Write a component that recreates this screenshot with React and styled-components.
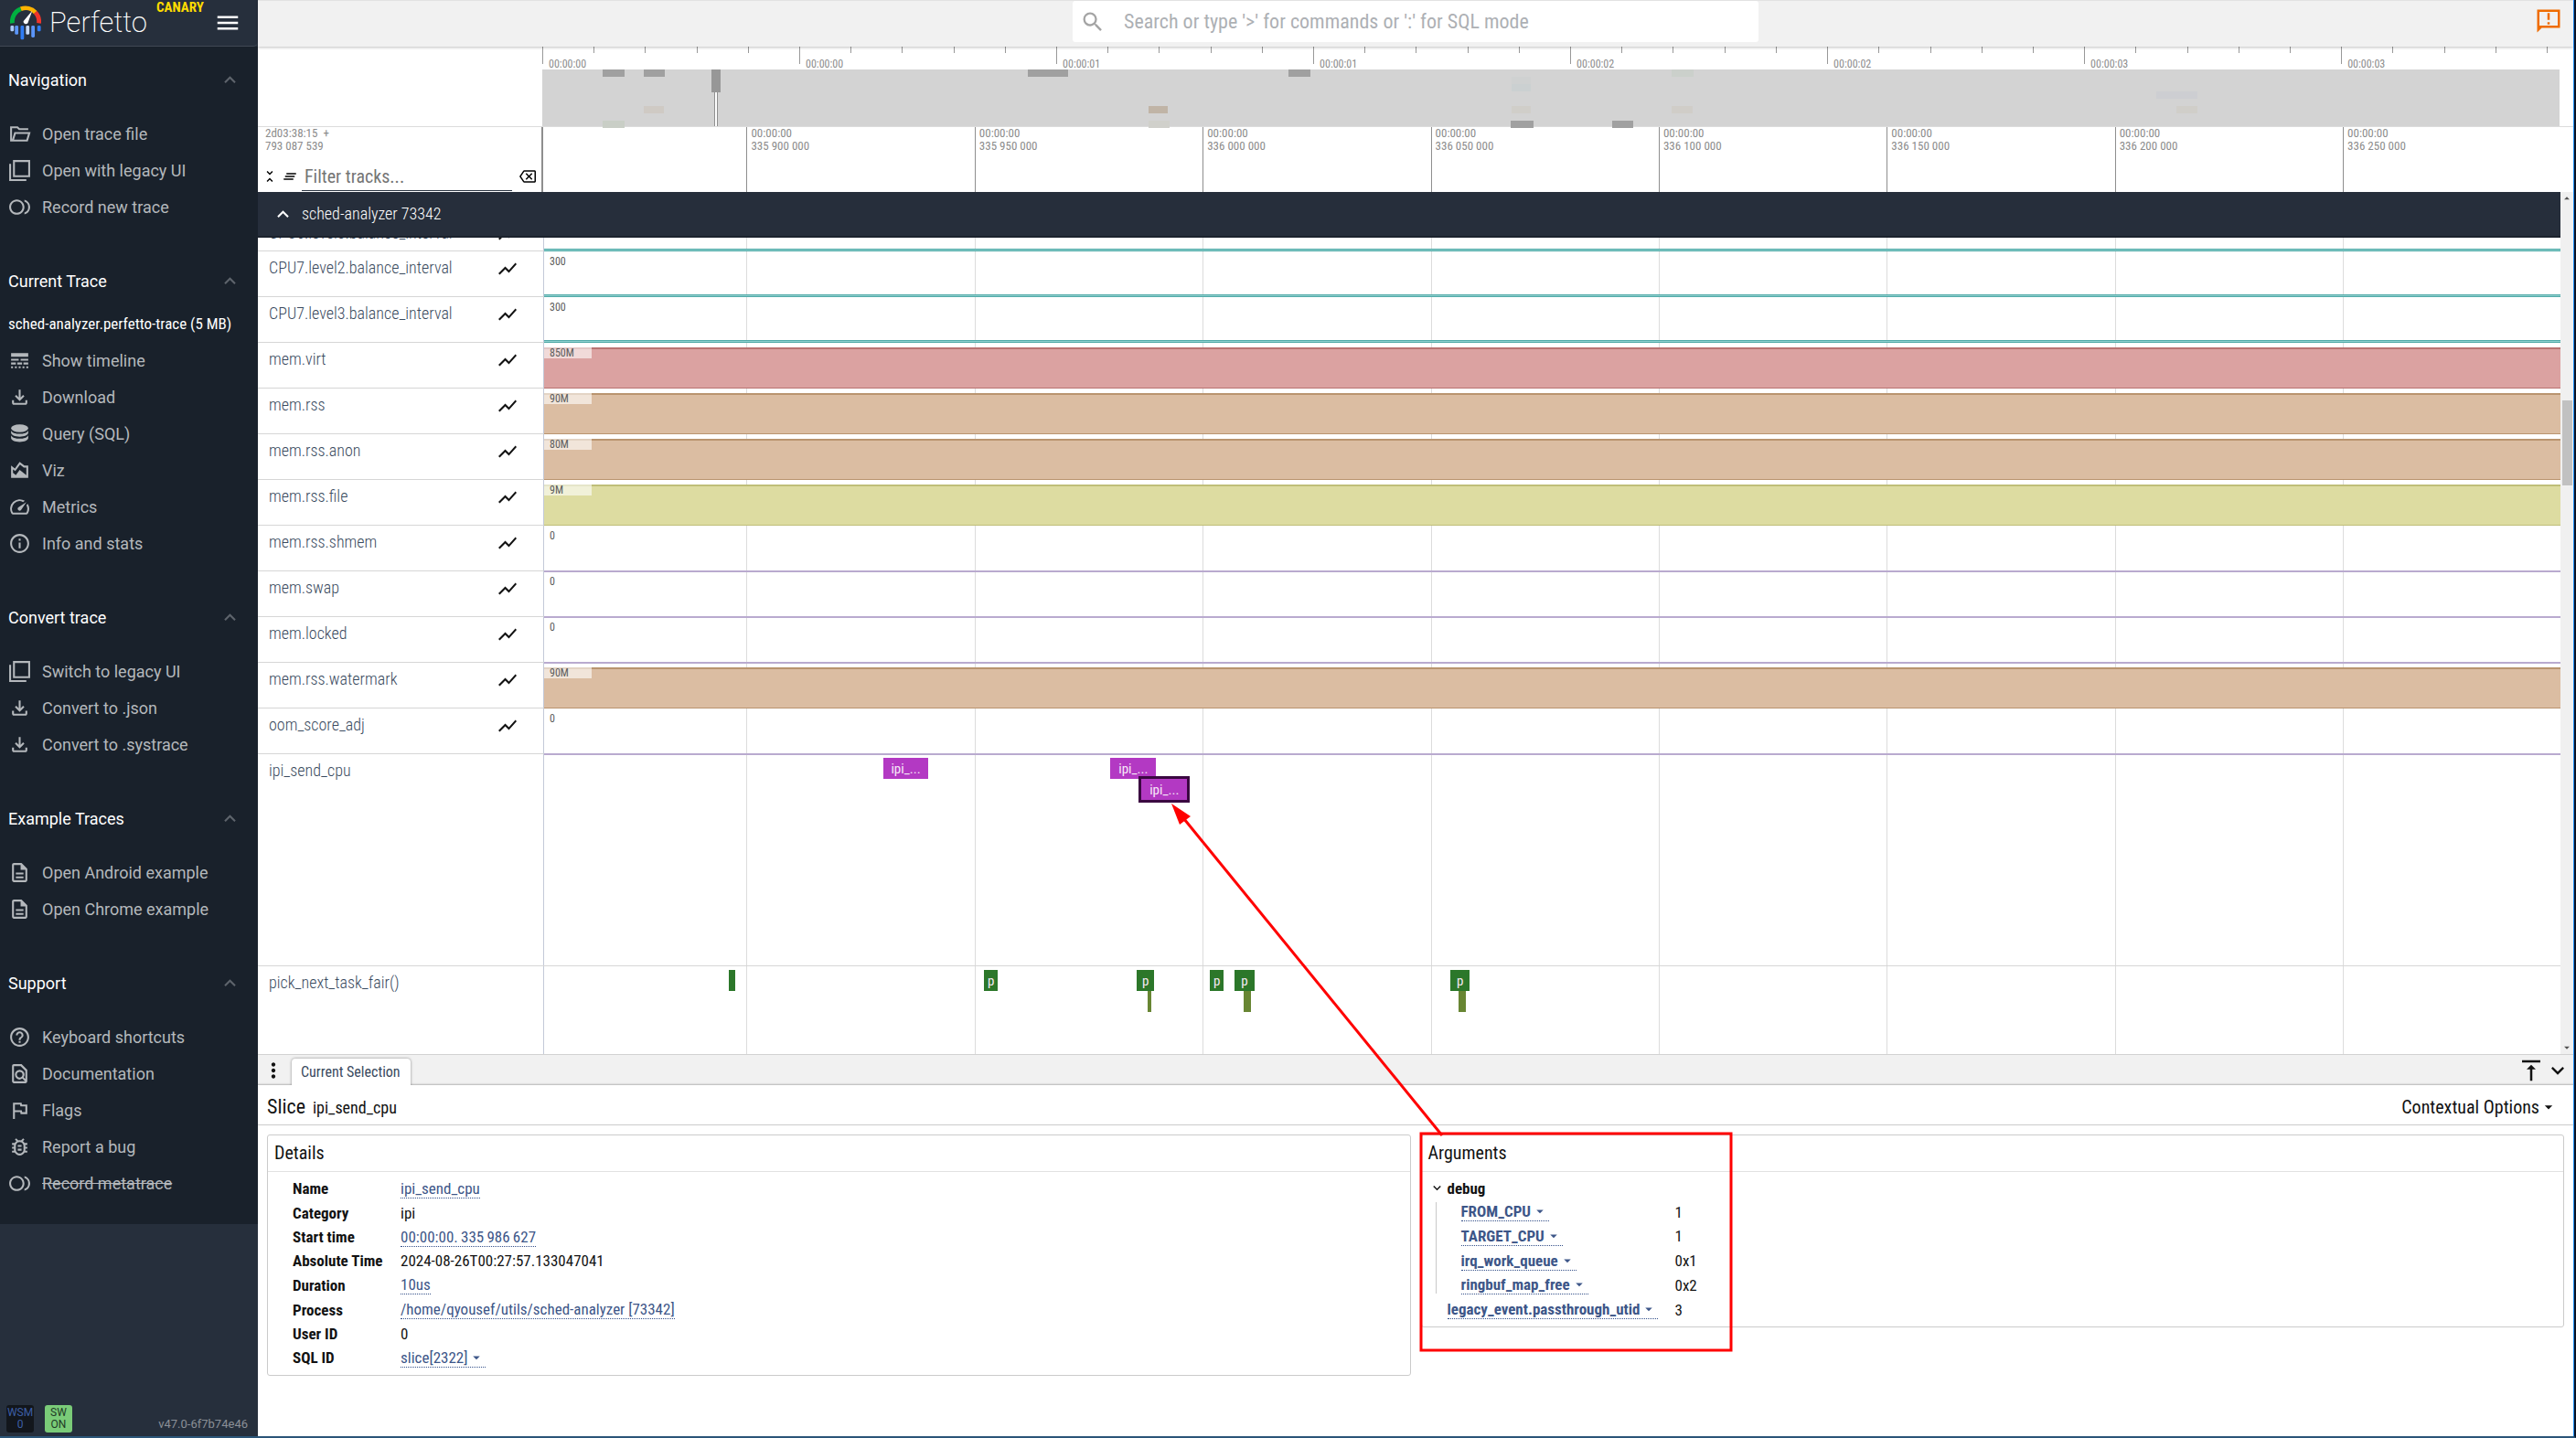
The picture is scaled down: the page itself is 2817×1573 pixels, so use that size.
import React from "react";
import styled, { createGlobalStyle, css } from "styled-components";
import {
  MdOutlineFiberSmartRecord,
  MdLineStyle,
  MdOutlineFileDownload,
  MdOutlineAreaChart,
  MdSpeed,
  MdInfoOutline,
  MdOutlineDescription,
  MdHelpOutline,
  MdOutlineFindInPage,
  MdOutlineFlag,
  MdOutlineBugReport,
  MdShowChart,
  MdClearAll,
  MdUnfoldLess,
  MdOutlineBackspace,
  MdVerticalAlignTop,
  MdExpandMore,
  MdExpandLess,
  MdMoreVert,
  MdMenu,
  MdSearch,
  MdArrowDropDown,
  MdArrowDropUp,
} from "react-icons/md";

const SANS = `Roboto, "Liberation Sans", sans-serif`;
const CONDENSED = `"Roboto Condensed", Roboto, "Liberation Sans", sans-serif`;

const GlobalStyle = createGlobalStyle`
  *, *::before, *::after { box-sizing: border-box; }
  body { margin: 0; background: #fff; font-family: ${SANS}; color: #121212; }
  button { font: inherit; color: inherit; background: none; border: 0; padding: 0; cursor: pointer; }
  ul { list-style: none; margin: 0; padding: 0; }
  h1, h2, h3 { margin: 0; font-weight: 400; }
  svg { display: block; flex: none; }
`;

/* ---------- shell ---------- */

const Page = styled.div`
  position: relative;
  display: flex;
  height: 100vh;
  overflow: hidden;
  border-right: 2px solid #0a1326;
  border-bottom: 2px solid #2b5578;
`;

const Main = styled.main`
  flex: 1;
  min-width: 0;
  display: flex;
  flex-direction: column;
  border-right: 1px solid #1e8fff;
`;

/* ---------- sidebar ---------- */

const Sidebar = styled.nav`
  flex: 0 0 282px;
  display: flex;
  flex-direction: column;
  background: #262f3c;
`;

const Brand = styled.header`
  display: flex;
  align-items: center;
  height: 51px;
  padding: 0 18px 0 11px;
  border-bottom: 1px solid #404854;
  border-bottom-right-radius: 5px;
`;

const BrandName = styled.h1`
  margin-left: 9px;
  font-size: 31px;
  line-height: 36px;
  font-weight: 200;
  color: #fff;
`;

const Channel = styled.span`
  align-self: flex-start;
  margin-left: 10px;
  font: 700 15px/16px ${CONDENSED};
  color: #ffdd00;
`;

const MenuButton = styled.button`
  margin-left: auto;
  font-size: 30px;
  color: #fff;
`;

const SidebarScroll = styled.div`
  display: flex;
  flex-direction: column;
  gap: 43px;
  padding: 18px 0 25px;
  background: #19212b;
`;

const SectionTitle = styled.h2`
  display: flex;
  align-items: center;
  justify-content: space-between;
  height: 36px;
  padding: 0 18px 0 9px;
  margin-bottom: ${(p) => (p.$tight ? 9 : 21)}px;
  font-size: 18px;
  font-weight: 400;
  color: #fff;

  svg {
    font-size: 25px;
    color: #5e646c;
  }
`;

const TraceName = styled.div`
  padding-left: 9px;
  font: 400 17px/40px ${CONDENSED};
  color: #fff;
  white-space: nowrap;
`;

const NavLink = styled.a`
  display: flex;
  align-items: center;
  gap: 12px;
  height: 40px;
  padding-left: 9px;
  font-size: 18px;
  color: #b4b8bc;
  text-decoration: ${(p) => (p.$struck ? "line-through" : "none")};

  svg {
    font-size: 25px;
  }
`;

const SidebarFooter = styled.footer`
  display: flex;
  align-items: flex-end;
  gap: 12px;
  margin-top: auto;
  padding: 0 11px 4px 7px;
`;

const Badge = styled.button`
  width: 30px;
  height: 30px;
  border-radius: 3px;
  background: ${(p) => (p.$on ? "#7acb78" : "#12161c")};
  color: ${(p) => (p.$on ? "#1f3a26" : "#3d5fa6")};
  font-size: 12px;
  line-height: 13px;
`;

const Version = styled.a`
  margin-left: auto;
  font-size: 13px;
  line-height: 18px;
  color: #8b9097;
  text-decoration: none;
`;

/* ---------- top bar ---------- */

const Topbar = styled.header`
  position: relative;
  z-index: 2;
  flex: none;
  display: grid;
  grid-template-columns: 1fr 750px 1fr;
  align-items: start;
  height: 51px;
  padding-top: 1px;
  background: #f1f1f1;
  box-shadow: 0 1px 3px rgba(0, 0, 0, 0.25), inset 0 1px 0 #e2e2e2;
`;

const Omnibox = styled.label`
  grid-column: 2;
  display: flex;
  align-items: center;
  gap: 20px;
  height: 45px;
  padding-left: 8px;
  border-radius: 3px;
  background: #fff;

  svg {
    font-size: 28px;
    color: #a4a4a4;
  }

  input {
    flex: 1;
    border: 0;
    outline: 0;
    padding: 0;
    background: none;
    font: 400 22px/30px ${CONDENSED};
  }

  input::placeholder {
    color: #adb0b4;
    opacity: 1;
  }
`;

const AlertButton = styled.button`
  justify-self: end;
  margin: 7px 12px 0 0;
  font-size: 30px;
  color: #ef6c00;
`;

/* ---------- overview ---------- */

const Overview = styled.section`
  flex: none;
  padding: 0 15px 0 311px;
  border-bottom: 1px solid #dcdcdc;
`;

const OverviewRuler = styled.div`
  position: relative;
  height: 25px;
  overflow: hidden;
`;

const Tick = styled.span`
  position: absolute;
  top: 0;
  height: ${(p) => (p.$major ? 19 : 7)}px;
  border-left: 1px solid #999;
`;

const TickLabel = styled.span`
  position: absolute;
  top: 11px;
  padding-left: 7px;
  font: 400 12px/16px ${CONDENSED};
  color: #8c8c8c;
`;

const OverviewBand = styled.div`
  position: relative;
  height: 62px;
  background: #d3d3d3;
`;

const Load = styled.span`
  position: absolute;
  top: ${(p) => p.$lane * 8}px;
  height: 8px;
  background: ${(p) => p.$tone};
`;

const Brush = styled.button`
  position: absolute;
  top: 0;
  width: 10px;
  height: 62px;
  background: linear-gradient(#979797 25px, transparent 25px);

  &::after {
    content: "";
    position: absolute;
    left: 3px;
    top: 25px;
    bottom: 0;
    width: 4px;
    background: #fff;
    border: solid #8f8f8f;
    border-width: 0 1px;
  }
`;

/* ---------- time axis ---------- */

const AxisRow = styled.section`
  flex: none;
  display: flex;
  height: 71px;
`;

const AxisShell = styled.div`
  flex: 0 0 312px;
  display: flex;
  flex-direction: column;
  justify-content: space-between;
  padding: 0 6px 1px 4px;
  border-right: 2px solid #8e8e8e;
`;

const Stamp = styled.div`
  padding-left: 4px;
  font: 400 13px/14px ${CONDENSED};
  color: #8c8c8c;
  white-space: pre;
`;

const FilterBar = styled.div`
  display: flex;
  align-items: center;
  height: 32px;

  button {
    font-size: 18px;
    color: #000;
  }

  button + button {
    margin-left: 4px;
  }

  input {
    width: 230px;
    height: 32px;
    margin: 0 8px 0 4px;
    padding: 0 0 0 3px;
    border: 0;
    border-bottom: 1px solid #2a3442;
    border-radius: 0;
    outline: 0;
    background: none;
    font: 400 20px/28px ${CONDENSED};
  }

  input::placeholder {
    color: #757575;
    opacity: 1;
  }
`;

const AxisCanvas = styled.div`
  position: relative;
  flex: 1;
  margin-right: 14px;
  overflow: hidden;
`;

const AxisMark = styled.div`
  position: absolute;
  top: 0;
  bottom: 0;
  border-left: 1px solid #8e8e8e;
`;

/* ---------- tracks ---------- */

const Viewport = styled.section`
  flex: 1;
  min-height: 0;
  display: flex;
`;

const TrackPane = styled.div`
  flex: 1;
  min-width: 0;
  display: flex;
  flex-direction: column;
`;

const GroupHeader = styled.button`
  position: relative;
  z-index: 1;
  flex: none;
  display: flex;
  align-items: center;
  gap: 8px;
  height: 50px;
  padding-left: 15px;
  background: #262e3b;
  border-bottom: 2px solid #1c232d;
  color: #fff;
  font: 300 18px/24px ${CONDENSED};

  svg {
    font-size: 25px;
  }
`;

const TrackClip = styled.div`
  position: relative;
  flex: 1;
  min-height: 0;
  overflow: hidden;
`;

const GridLayer = styled.div`
  position: absolute;
  inset: 0 0 0 312px;
`;

const GridLine = styled.span`
  position: absolute;
  top: 0;
  bottom: 0;
  border-left: 1px solid #dcdcdc;
`;

const TrackList = styled.div`
  position: relative;
  margin-top: -23px;
`;

const Track = styled.div`
  display: flex;
  height: ${(p) => p.$height}px;
`;

const TrackShell = styled.div`
  flex: 0 0 313px;
  display: flex;
  align-items: flex-start;
  justify-content: space-between;
  padding: 0 27px 0 12px;
  border-right: 1px solid #c3c9d8;
  border-bottom: 1px solid #d6d6d6;
  font: 300 18px/36px ${CONDENSED};
  color: #3a4a5e;

  button {
    padding-top: 7px;
    font-size: 24px;
    color: #121212;
  }
`;

const CounterCanvas = styled.div`
  flex: 1;
  position: relative;
  display: flex;
  flex-direction: column;
  justify-content: flex-end;
`;

const counterLook = {
  line: css`
    height: 3px;
    background: #8fd0ce;
    border: solid #4fa9a7;
    border-width: 1px 0;
  `,
  zero: css`
    height: 2px;
    margin-bottom: -1px;
    background: #b9aacf;
  `,
  area: css`
    height: 45px;
    background: ${(p) => p.$tone[0]};
    border: solid ${(p) => p.$tone[1]};
    border-width: 2px 0 1px;
  `,
};

const CounterFill = styled.div`
  ${(p) => counterLook[p.$kind]}
`;

const CounterLabel = styled.span`
  position: absolute;
  top: 5px;
  left: 0;
  width: ${(p) => (p.$chip ? "52px" : "auto")};
  padding-left: 6px;
  background: ${(p) => (p.$chip ? "rgba(255, 255, 255, 0.6)" : "none")};
  font: 400 12px/12px ${CONDENSED};
  color: #5c5c5c;
`;

const SliceCanvas = styled.div`
  flex: 1;
  position: relative;
  margin-left: -1px;
  border-bottom: 1px solid #d6d6d6;
`;

const sliceTone = { ipi: "#b339c3", pick: "#2c772a", nested: "#688633" };

const Slice = styled.button`
  position: absolute;
  top: ${(p) => 4 + p.$depth * 23}px;
  height: 23px;
  overflow: hidden;
  background: ${(p) => sliceTone[p.$tone]};
  color: #f7e9f8;
  font: 400 15px/22px ${CONDENSED};
  text-align: center;
  white-space: nowrap;
  ${(p) => p.$selected && "outline: 3px solid #3b0841;"}
`;

const Scrollbar = styled.div`
  flex: 0 0 14px;
  min-width: 0;
  display: flex;
  flex-direction: column;
  align-items: center;
  background: #f0f0f0;
  color: #505050;
  font-size: 14px;
`;

const Thumb = styled.div`
  width: 11px;
  height: 93px;
  margin-top: 214px;
  margin-bottom: auto;
  background: #c1c1c1;
`;

/* ---------- details panel ---------- */

const Drawer = styled.section`
  flex: 0 0 418px;
  display: flex;
  flex-direction: column;
  background: #fff;
`;

const TabStrip = styled.div`
  display: flex;
  align-items: flex-end;
  height: 34px;
  padding: 0 3px 0 4px;
  background: #f1f1f1;
  border-top: 1px solid #d2d2d2;
  box-shadow: inset 0 -2px 2px -1px rgba(0, 0, 0, 0.25);
`;

const IconButton = styled.button`
  align-self: center;
  font-size: ${(p) => p.$size}px;
  color: #121212;
`;

const Tab = styled.button`
  height: 29px;
  margin: 0 auto 0 7px;
  padding: 0 11px 0 10px;
  border-radius: 4px 4px 0 0;
  background: #fff;
  box-shadow: 0 0 3px rgba(0, 0, 0, 0.45);
  clip-path: inset(-4px -4px 0 -4px);
  font: 400 16px/29px ${CONDENSED};
  color: #3a4a5e;
`;

const DrawerHeader = styled.header`
  display: flex;
  align-items: baseline;
  gap: 8px;
  height: 44px;
  padding: 0 17px 0 10px;
  border-bottom: 1px solid #cbcbcb;
  font: 400 18px/48px ${CONDENSED};
`;

const DrawerTitle = styled.h2`
  font-size: 22px;
  line-height: 48px;
`;

const OptionsButton = styled.button`
  display: flex;
  align-items: center;
  margin-left: auto;
  font-size: 20px;
  line-height: 48px;
`;

const Cards = styled.div`
  display: grid;
  grid-template-columns: 1fr 1fr;
  align-items: start;
  gap: 11px;
  padding: 10px;
`;

const Card = styled.section`
  border: 1px solid #cbcbcb;
  border-radius: 3px;
`;

const CardTitle = styled.h3`
  padding-left: 7px;
  border-bottom: 1px solid #e2e2e2;
  font: 400 20px/39px ${CONDENSED};
`;

const FactTable = styled.table`
  height: ${(p) => p.$height}px;
  margin: 5px 0 5px ${(p) => p.$indent}px;
  border-collapse: collapse;
  font: 400 17px/20px ${CONDENSED};

  th,
  td {
    padding: 0;
    text-align: left;
    vertical-align: middle;
    white-space: nowrap;
  }

  th {
    width: ${(p) => p.$keyWidth}px;
    font-weight: 700;
  }
`;

const TreeKey = styled.div`
  display: flex;
  align-items: center;
  padding-left: ${(p) => (p.$leaf ? 20 : 24)}px;
`;

const Branch = styled.td`
  && {
    width: 11px;
  }

  background: linear-gradient(#c9c9c9, #c9c9c9) 7px 3px / 1px 100px no-repeat;
`;

const Toggle = styled.button`
  display: flex;
  align-items: center;
  gap: 3px;
  font-weight: 700;
`;

const linkLook = css`
  display: inline-flex;
  align-items: center;
  height: 21px;
  border-bottom: 1px dotted #34508a;
  color: #3d5688;
  text-decoration: none;

  svg {
    margin: 0 1px;
    font-size: 18px;
  }
`;

const ValueLink = styled.a`
  ${linkLook}
`;

const MenuLink = styled.button`
  ${linkLook}
  font-weight: inherit;
`;

const Annotation = styled.svg`
  position: absolute;
  inset: 0;
  z-index: 5;
  width: 100%;
  height: 100%;
  pointer-events: none;
`;

/* ---------- data ---------- */

const sections = [
  {
    title: "Navigation",
    items: [
      [FolderIcon, "Open trace file"],
      [StackIcon, "Open with legacy UI"],
      [MdOutlineFiberSmartRecord, "Record new trace"],
    ],
  },
  {
    title: "Current Trace",
    file: "sched-analyzer.perfetto-trace (5 MB)",
    items: [
      [MdLineStyle, "Show timeline"],
      [MdOutlineFileDownload, "Download"],
      [DatabaseIcon, "Query (SQL)"],
      [MdOutlineAreaChart, "Viz"],
      [MdSpeed, "Metrics"],
      [MdInfoOutline, "Info and stats"],
    ],
  },
  {
    title: "Convert trace",
    items: [
      [StackIcon, "Switch to legacy UI"],
      [MdOutlineFileDownload, "Convert to .json"],
      [MdOutlineFileDownload, "Convert to .systrace"],
    ],
  },
  {
    title: "Example Traces",
    items: [
      [MdOutlineDescription, "Open Android example"],
      [MdOutlineDescription, "Open Chrome example"],
    ],
  },
  {
    title: "Support",
    items: [
      [MdHelpOutline, "Keyboard shortcuts"],
      [MdOutlineFindInPage, "Documentation"],
      [MdOutlineFlag, "Flags"],
      [MdOutlineBugReport, "Report a bug"],
      [MdOutlineFiberSmartRecord, "Record metatrace", true],
    ],
  },
];

// Overview times are in milliseconds from the start of the trace.
const TRACE_MS = 3925;
const ofTrace = (ms) => `${(ms / TRACE_MS) * 100}%`;

const loads = [
  [117, 43, 0, "#a0a0a0"],
  [198, 41, 0, "#a0a0a0"],
  [944, 79, 0, "#a0a0a0"],
  [1452, 43, 0, "#a0a0a0"],
  [117, 43, 7, "#c9cec6"],
  [198, 38, 5, "#cfcac4"],
  [1180, 37, 5, "#c0b4a6"],
  [1180, 40, 7, "#d0d0cb"],
  [1886, 37, 1, "#cfd1d1"],
  [1886, 37, 2, "#cbd0d1"],
  [1886, 37, 5, "#d0cec9"],
  [1885, 43, 7, "#a0a0a0"],
  [2081, 42, 7, "#a0a0a0"],
  [2198, 42, 0, "#cbd0cb"],
  [2198, 41, 5, "#d0cdc8"],
  [3141, 79, 3, "#cdced2"],
  [3180, 40, 5, "#d0cec9"],
];

// Slice times are in microseconds; the window shows 442 of them.
const WINDOW_START = 335855.4;
const WINDOW_SPAN = 442.3;
const ofSpan = (us) => `${(us / WINDOW_SPAN) * 100}%`;
const atTime = (us) => ofSpan(us - WINDOW_START);

const marks = Array.from({ length: 8 }, (_, i) => 335900 + i * 50);

const tones = {
  red: ["#dba2a1", "#b97372"],
  tan: ["#dbbda2", "#b9946f"],
  olive: ["#dddca1", "#bfbe78"],
};

const counters = [
  ["CPU6.level3.balance_interval", null, "line"],
  ["CPU7.level2.balance_interval", "300", "line"],
  ["CPU7.level3.balance_interval", "300", "line"],
  ["mem.virt", "850M", "area", "red"],
  ["mem.rss", "90M", "area", "tan"],
  ["mem.rss.anon", "80M", "area", "tan"],
  ["mem.rss.file", "9M", "area", "olive"],
  ["mem.rss.shmem", "0", "zero"],
  ["mem.swap", "0", "zero"],
  ["mem.locked", "0", "zero"],
  ["mem.rss.watermark", "90M", "area", "tan"],
  ["oom_score_adj", "0", "zero"],
];

const sliceTracks = [
  {
    name: "ipi_send_cpu",
    height: 232,
    slices: [
      { ts: 335929.9, dur: 10, text: "ipi_...", tone: "ipi" },
      { ts: 335979.8, dur: 10, text: "ipi_...", tone: "ipi" },
      { ts: 335986.6, dur: 10, depth: 1, text: "ipi_...", tone: "ipi", selected: true },
    ],
  },
  {
    name: "pick_next_task_fair()",
    height: 120,
    slices: [
      { ts: 335896.1, dur: 1.5, tone: "pick" },
      { ts: 335952.1, dur: 3, text: "p", tone: "pick" },
      { ts: 335985.5, dur: 3.9, text: "p", tone: "pick" },
      { ts: 335987.9, dur: 0.8, depth: 1, tone: "nested" },
      { ts: 336001.6, dur: 3, text: "p", tone: "pick" },
      { ts: 336007, dur: 4.3, text: "p", tone: "pick" },
      { ts: 336008.9, dur: 1.7, depth: 1, tone: "nested" },
      { ts: 336054.3, dur: 4.3, text: "p", tone: "pick" },
      { ts: 336056, dur: 1.8, depth: 1, tone: "nested" },
    ],
  },
];

const facts = [
  ["Name", "ipi_send_cpu", "link"],
  ["Category", "ipi"],
  ["Start time", "00:00:00.\u2009335\u2009986\u2009627", "link"],
  ["Absolute Time", "2024-08-26T00:27:57.133047041"],
  ["Duration", "10us", "link"],
  ["Process", "/home/qyousef/utils/sched-analyzer [73342]", "link"],
  ["User ID", "0"],
  ["SQL ID", "slice[2322]", "menu"],
];

const debugArgs = [
  ["FROM_CPU", "1"],
  ["TARGET_CPU", "1"],
  ["irq_work_queue", "0x1"],
  ["ringbuf_map_free", "0x2"],
];

/* ---------- drawings ---------- */

function FolderIcon() {
  return (
    <svg width="1em" height="1em" viewBox="0 -960 960 960" fill="currentColor">
      <path d="M80-160v-640h320l80 80h360v80H447l-80-80H160v480l96-320h684L820-160H80Zm164-80h516l72-240H316l-72 240Z" />
    </svg>
  );
}

function StackIcon() {
  return (
    <svg width="1em" height="1em" viewBox="0 0 24 24" fill="currentColor">
      <path fillRule="evenodd" d="M1 5h2v16h16v2H1zM5 1h18v18H5zm2 2v14h14V3z" />
    </svg>
  );
}

function FeedbackIcon() {
  return (
    <svg width="1em" height="1em" viewBox="0 0 24 24" fill="currentColor">
      <path fillRule="evenodd" d="M2 2v20l4-4h16V2zm2 2h16v12H4zM11 5h2v6h-2zM11 13h2v2h-2z" />
    </svg>
  );
}

function DatabaseIcon() {
  return (
    <svg width="1em" height="1em" viewBox="0 0 24 24" fill="currentColor">
      <ellipse cx="12" cy="6.2" rx="9" ry="4" />
      <path d="M3 8.6c1 2.2 4.600 3.500 9 3.500s8-1.300 9-3.500v2.400c0 2.200-4 4-9 4s-9-1.800-9-4z" />
      <path d="M3 13.600c1 2.200 4.600 3.500 9 3.500s8-1.300 9-3.500v3c0 2.200-4 4-9 4s-9-1.800-9-4z" />
    </svg>
  );
}

function Logo() {
  const bars = [
    [6, 18, "#aecbfa"],
    [20, 28, "#5b95f9"],
    [38, 44, "#2f7df6"],
    [55, 28, "#c6dafc"],
    [72, 37, "#5b95f9"],
    [91, 18, "#2f7df6"],
  ];
  return (
    <svg width="34" height="38" viewBox="0 0 98 110" fill="none">
      <path d="M7 56A42 42 0 0 1 34 11" stroke="#00b140" strokeWidth="14" />
      <path d="M34 11A42 42 0 0 1 80 22" stroke="#ffb300" strokeWidth="14" />
      <path d="M80 22A42 42 0 0 1 91 56" stroke="#f0352b" strokeWidth="14" />
      <path d="M70 17L56 56A8 8 0 0 1 42 50Z" fill="#fff" />
      {bars.map(([x, h, c]) => (
        <rect key={x} x={x - 5} y="64" width="11" height={h} rx="4" fill={c} />
      ))}
    </svg>
  );
}

/* ---------- parts ---------- */

function SideNav() {
  return (
    <Sidebar aria-label="Main">
      <Brand>
        <Logo />
        <BrandName>Perfetto</BrandName>
        <Channel>CANARY</Channel>
        <MenuButton aria-label="Toggle sidebar">
          <MdMenu />
        </MenuButton>
      </Brand>
      <SidebarScroll>
        {sections.map((s) => (
          <section key={s.title}>
            <SectionTitle $tight={Boolean(s.file)}>
              {s.title}
              <MdExpandLess />
            </SectionTitle>
            {s.file && <TraceName>{s.file}</TraceName>}
            <ul>
              {s.items.map(([Icon, text, struck]) => (
                <li key={text}>
                  <NavLink href="#" $struck={struck}>
                    <Icon />
                    {text}
                  </NavLink>
                </li>
              ))}
            </ul>
          </section>
        ))}
      </SidebarScroll>
      <SidebarFooter>
        <Badge>
          WSM
          <br />0
        </Badge>
        <Badge $on>
          SW
          <br />
          ON
        </Badge>
        <Version href="#">v47.0-6f7b74e46</Version>
      </SidebarFooter>
    </Sidebar>
  );
}

function OverviewTimeline() {
  return (
    <Overview>
      <OverviewRuler>
        {Array.from({ length: 40 }, (_, i) => (
          <Tick key={i} $major={i % 5 === 0} style={{ left: ofTrace(i * 100) }} />
        ))}
        {Array.from({ length: 8 }, (_, i) => (
          <TickLabel key={i} style={{ left: ofTrace(i * 500) }}>
            00:00:0{Math.floor(i / 2)}
          </TickLabel>
        ))}
      </OverviewRuler>
      <OverviewBand>
        {loads.map(([ts, dur, lane, tone], i) => (
          <Load key={i} $lane={lane} $tone={tone} style={{ left: ofTrace(ts), width: ofTrace(dur) }} />
        ))}
        <Brush aria-label="Visible window" style={{ left: ofTrace(330) }} />
      </OverviewBand>
    </Overview>
  );
}

function TimeAxis() {
  return (
    <AxisRow>
      <AxisShell>
        <Stamp>{"2d03:38:15  +\n793 087 539"}</Stamp>
        <FilterBar>
          <button aria-label="Collapse all">
            <MdUnfoldLess />
          </button>
          <button aria-label="Clear pinned tracks">
            <MdClearAll />
          </button>
          <input aria-label="Filter tracks" placeholder="Filter tracks..." />
          <button aria-label="Clear filter">
            <MdOutlineBackspace />
          </button>
        </FilterBar>
      </AxisShell>
      <AxisCanvas>
        {marks.map((t) => (
          <AxisMark key={t} style={{ left: atTime(t) }}>
            <Stamp>{`00:00:00\n${Math.floor(t / 1000)} ${String(t % 1000).padStart(3, "0")} 000`}</Stamp>
          </AxisMark>
        ))}
      </AxisCanvas>
    </AxisRow>
  );
}

function Tracks() {
  return (
    <Viewport>
      <TrackPane>
        <GroupHeader>
          <MdExpandLess />
          sched-analyzer 73342
        </GroupHeader>
        <TrackClip>
          <GridLayer>
            {marks.map((t) => (
              <GridLine key={t} style={{ left: atTime(t) }} />
            ))}
          </GridLayer>
          <TrackList>
            {counters.map(([name, label, kind, tone], i) => (
              <Track key={name} $height={i === 0 ? 38 : 50}>
                <TrackShell>
                  {name}
                  <button aria-label={`Chart options for ${name}`}>
                    <MdShowChart />
                  </button>
                </TrackShell>
                <CounterCanvas>
                  <CounterFill $kind={kind} $tone={tones[tone]} />
                  {label && <CounterLabel $chip={kind === "area"}>{label}</CounterLabel>}
                </CounterCanvas>
              </Track>
            ))}
            {sliceTracks.map((t) => (
              <Track key={t.name} $height={t.height}>
                <TrackShell>{t.name}</TrackShell>
                <SliceCanvas>
                  {t.slices.map((s) => (
                    <Slice
                      key={s.ts}
                      $depth={s.depth || 0}
                      $tone={s.tone}
                      $selected={s.selected}
                      aria-label={s.text ? undefined : t.name}
                      style={{ left: atTime(s.ts), width: ofSpan(s.dur) }}
                    >
                      {s.text}
                    </Slice>
                  ))}
                </SliceCanvas>
              </Track>
            ))}
          </TrackList>
        </TrackClip>
      </TrackPane>
      <Scrollbar>
        <MdArrowDropUp />
        <Thumb />
        <MdArrowDropDown />
      </Scrollbar>
    </Viewport>
  );
}

function FactValue({ kind, children }) {
  if (kind === "link") return <ValueLink href="#">{children}</ValueLink>;
  if (kind === "menu")
    return (
      <MenuLink>
        {children}
        <MdArrowDropDown />
      </MenuLink>
    );
  return children;
}

function Details() {
  return (
    <Card>
      <CardTitle>Details</CardTitle>
      <FactTable $height={212} $indent={27} $keyWidth={118}>
        <tbody>
          {facts.map(([key, value, kind]) => (
            <tr key={key}>
              <th scope="row">{key}</th>
              <td>
                <FactValue kind={kind}>{value}</FactValue>
              </td>
            </tr>
          ))}
        </tbody>
      </FactTable>
    </Card>
  );
}

function Arguments() {
  return (
    <Card>
      <CardTitle>Arguments</CardTitle>
      <FactTable $height={159} $indent={8} $keyWidth={258}>
        <tbody>
          <tr>
            <th scope="row" colSpan={2}>
              <Toggle aria-expanded="true">
                <MdExpandMore />
                debug
              </Toggle>
            </th>
            <td />
          </tr>
          {debugArgs.map(([key, value], i) => (
            <tr key={key}>
              {i === 0 && <Branch rowSpan={debugArgs.length} />}
              <th scope="row">
                <TreeKey>
                  <FactValue kind="menu">{key}</FactValue>
                </TreeKey>
              </th>
              <td>{value}</td>
            </tr>
          ))}
          <tr>
            <th scope="row" colSpan={2}>
              <TreeKey $leaf>
                <FactValue kind="menu">legacy_event.passthrough_utid</FactValue>
              </TreeKey>
            </th>
            <td>3</td>
          </tr>
        </tbody>
      </FactTable>
    </Card>
  );
}

function DetailsDrawer() {
  return (
    <Drawer>
      <TabStrip>
        <IconButton $size={26} aria-label="More tabs">
          <MdMoreVert />
        </IconButton>
        <Tab>Current Selection</Tab>
        <IconButton $size={30} aria-label="Expand panel">
          <MdVerticalAlignTop />
        </IconButton>
        <IconButton $size={28} aria-label="Collapse panel">
          <MdExpandMore />
        </IconButton>
      </TabStrip>
      <DrawerHeader>
        <DrawerTitle>Slice</DrawerTitle>
        ipi_send_cpu
        <OptionsButton>
          Contextual Options
          <MdArrowDropDown />
        </OptionsButton>
      </DrawerHeader>
      <Cards>
        <Details />
        <Arguments />
      </Cards>
    </Drawer>
  );
}

export default function App() {
  return (
    <>
      <GlobalStyle />
      <Page>
        <SideNav />
        <Main>
          <Topbar>
            <Omnibox>
              <MdSearch />
              <input aria-label="Search" placeholder="Search or type '>' for commands or ':' for SQL mode" />
            </Omnibox>
            <AlertButton aria-label="Notifications">
              <FeedbackIcon />
            </AlertButton>
          </Topbar>
          <OverviewTimeline />
          <TimeAxis />
          <Tracks />
          <DetailsDrawer />
        </Main>
        <Annotation aria-hidden="true">
          <rect x="1554" y="1240" width="339" height="237" fill="none" stroke="#f00" strokeWidth="3" />
          <path d="M1577 1242L1295 896" stroke="#f00" strokeWidth="3" />
          <path d="M1281 879L1302 893L1290 902Z" fill="#f00" />
        </Annotation>
      </Page>
    </>
  );
}
